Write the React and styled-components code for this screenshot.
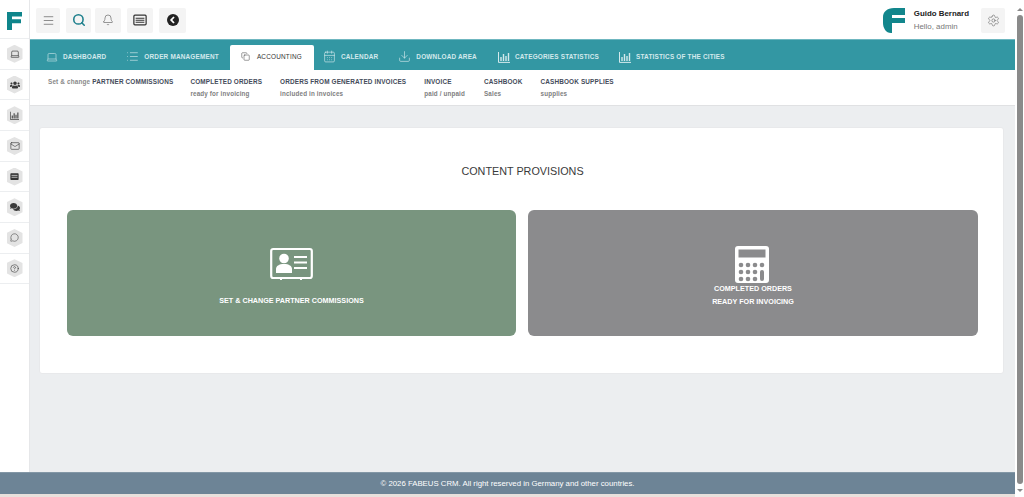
import React from "react";
import styled, { createGlobalStyle } from "styled-components";
import {
  Menu,
  Search,
  Bell,
  Settings,
  Laptop,
  List,
  Copy,
  CalendarDays,
  Download,
  Mail,
  MessageCircle,
  CircleHelp,
} from "lucide-react";
import { FaUsers, FaComments } from "react-icons/fa";

const GlobalStyle = createGlobalStyle`
  html, body {
    margin: 0;
    padding: 0;
    height: 100%;
    overflow: hidden;
    background: #eceef0;
  }
  * { box-sizing: border-box; }
  #root { height: 100%; }
`;

const Page = styled.div`
  width: 1024px;
  height: 497px;
  display: flex;
  font-family: "Liberation Sans", Arial, sans-serif;
  color: #333;
  overflow: hidden;
`;

const Main = styled.div`
  width: 1015px;
  height: 497px;
  display: flex;
  flex-direction: column;
  flex-shrink: 0;
`;

const Body = styled.div`
  flex: 1;
  display: flex;
  min-height: 0;
`;

const Side = styled.aside`
  width: 30px;
  flex-shrink: 0;
  background: #fff;
  border-right: 1px solid #e6e7e9;
  display: flex;
  flex-direction: column;
`;

const LogoCell = styled.div`
  height: 38px;
  display: flex;
  align-items: center;
  justify-content: center;
  padding: 4px 1px 0 0;
`;

const SideItem = styled.div`
  height: 30.7px;
  display: flex;
  align-items: center;
  justify-content: center;
  border-top: 1px solid #eceef0;
  &:last-child {
    border-bottom: 1px solid #eceef0;
  }
`;

const Hex = styled.div`
  width: 16px;
  height: 18px;
  background: #e3e3e3;
  clip-path: polygon(50% 0, 100% 22%, 100% 78%, 50% 100%, 0 78%, 0 22%);
  display: flex;
  align-items: center;
  justify-content: center;
  color: #3a3a3a;
`;

const Right = styled.div`
  flex: 1;
  min-width: 0;
  display: flex;
  flex-direction: column;
`;

const TopBar = styled.header`
  height: 39px;
  flex-shrink: 0;
  background: #fff;
  display: flex;
  align-items: center;
  padding: 1px 9px 0 6px;
`;

const ToolButton = styled.button`
  width: ${(p) => p.$w || 25}px;
  height: 25px;
  margin-right: ${(p) => p.$gap ?? 6}px;
  padding: 0;
  border: none;
  border-radius: 2px;
  background: #f4f4f4;
  display: flex;
  align-items: center;
  justify-content: center;
  flex-shrink: 0;
  color: ${(p) => p.$color || "#555"};
`;

const Spacer = styled.div`
  flex: 1;
`;

const User = styled.div`
  display: flex;
  flex-direction: column;
  gap: 4px;
  margin: 0 12px 0 9px;
  font-size: 7.9px;
`;

const UserName = styled.span`
  font-weight: bold;
  color: #222;
`;

const UserHello = styled.span`
  color: #777;
`;

const NavBar = styled.nav`
  height: 31px;
  flex-shrink: 0;
  background: #3397a3;
  border-top: 1px solid #6fb7c0;
  display: flex;
  align-items: flex-end;
`;

const NavItem = styled.a`
  height: 25px;
  padding: 0 ${(p) => p.$pr ?? 10}px 2px ${(p) => p.$pl ?? 10}px;
  display: flex;
  align-items: center;
  gap: ${(p) => (p.$active ? 7 : 5)}px;
  font-size: 6.4px;
  font-weight: ${(p) => (p.$active ? "normal" : "bold")};
  letter-spacing: 0.2px;
  white-space: nowrap;
  color: ${(p) => (p.$active ? "#333" : "#d3e9ec")};
  background: ${(p) => (p.$active ? "#fff" : "transparent")};
  border-radius: 2px 2px 0 0;
`;

const SubBar = styled.div`
  height: 36px;
  flex-shrink: 0;
  background: #fff;
  border-bottom: 1px solid #e0e1e3;
  display: flex;
  padding: 8px 0 0 18px;
`;

const SubItem = styled.div`
  margin-right: ${(p) => p.$gap}px;
  display: flex;
  flex-direction: column;
  gap: 5px;
  font-size: 6.4px;
  letter-spacing: 0.15px;
  white-space: nowrap;
`;

const SubTitle = styled.span`
  font-weight: bold;
  color: #444b5a;
`;

const SubLight = styled.span`
  font-weight: bold;
  color: #8a8a8a;
`;

const SubNote = styled.span`
  color: #808080;
  font-weight: bold;
  font-size: 6.3px;
`;

const Content = styled.main`
  flex: 1;
  min-height: 0;
  padding: 21px 11px 0 9px;
  background: #eceef0;
`;

const Card = styled.section`
  height: 247px;
  background: #fff;
  border: 1px solid #e8e9eb;
  border-radius: 3px;
  padding: 36px 25px 0 27px;
`;

const CardTitle = styled.h2`
  margin: 0 0 32px;
  font-size: 10.8px;
  line-height: 14px;
  font-weight: normal;
  text-align: center;
  color: #3a3a3a;
`;

const Tiles = styled.div`
  display: grid;
  grid-template-columns: 449px 1fr;
  gap: 12px;
`;

const Tile = styled.a`
  height: 126px;
  border-radius: 6px;
  background: ${(p) => p.$bg};
  color: #fff;
  display: flex;
  flex-direction: column;
  align-items: center;
  padding-top: ${(p) => p.$top}px;
  font-size: 7.2px;
  font-weight: bold;
  text-align: center;
`;

const TileLabel = styled.div`
  margin-top: ${(p) => p.$mt}px;
  line-height: 12.5px;
`;

const CalcWrap = styled.div`
  margin-right: 3px;
  height: 37px;
`;

const Footer = styled.footer`
  height: 22px;
  flex-shrink: 0;
  background: #6d8496;
  border-top: 1px solid #8397a6;
  color: #fff;
  font-size: 7.8px;
  display: flex;
  align-items: center;
  justify-content: center;
`;

const Strip = styled.div`
  height: 3px;
  flex-shrink: 0;
  background: #e8e0dc;
`;

const Scrollbar = styled.div`
  width: 9px;
  height: 497px;
  flex-shrink: 0;
  background: #fff;
  display: flex;
  flex-direction: column;
  align-items: center;
  padding: 8px 0 5px;
`;

const ScrollThumb = styled.div`
  flex: 1;
  width: 6px;
  margin: 4px 0 5px;
  border-radius: 3px;
  background: #8a8a8a;
`;

const ScrollArrow = styled.div`
  width: 0;
  height: 0;
  border-left: 3px solid transparent;
  border-right: 3px solid transparent;
  ${(p) =>
    p.$down ? "border-top: 3px solid #8a8a8a;" : "border-bottom: 3px solid #8a8a8a;"}
`;

const FLogo = () => (
  <svg width="15" height="18" viewBox="0 0 15 18">
    <path d="M0 0h15v4.6H5v2.6h9v4H5V18H0z" fill="#0f858b" />
  </svg>
);

const UserLogo = () => (
  <svg width="22" height="25" viewBox="0 0 22 25">
    <path d="M11 0h11v7H9v3h13v5H9v10H8C3 25 0 20 0 15V9C0 4 4 0 11 0z" fill="#12868c" />
  </svg>
);

const NewsIcon = ({ size = 14 }) => (
  <svg width={size} height={size} viewBox="0 0 16 16">
    <rect x="1" y="2.5" width="14" height="11" rx="1.2" fill="none" stroke="#333" strokeWidth="1.4" />
    <path d="M3 6h10M3 8.2h10M3 10.6h10" stroke="#333" strokeWidth="1.2" />
  </svg>
);

const BackIcon = () => (
  <svg width="12" height="12" viewBox="0 0 12 12">
    <circle cx="6" cy="6" r="6" fill="#222" />
    <path d="M7 3L4.2 6 7 9" fill="none" stroke="#fff" strokeWidth="1.8" />
  </svg>
);

const BarsIcon = ({ size = 12 }) => (
  <svg width={size} height={size} viewBox="0 0 12 12" fill="none" stroke="currentColor">
    <path d="M0.5 1v10.4H12" strokeWidth="1" />
    <path d="M3 10V6M5.5 10V3M8 10V5M10.5 10V2" strokeWidth="1.4" />
  </svg>
);

const PanelIcon = () => (
  <svg width="9" height="9" viewBox="0 0 12 12">
    <rect x="0.5" y="1.5" width="11" height="9" rx="1" fill="#333" />
    <path d="M2 4.5h8M2 7h8" stroke="#e3e3e3" strokeWidth="1" />
  </svg>
);

const ContactCard = () => (
  <svg width="43" height="34" viewBox="0 0 43 34">
    <rect x="1.2" y="2" width="40.6" height="29" rx="2" fill="none" stroke="#fff" strokeWidth="2.2" />
    <path d="M11 31v2M31 31v2" stroke="#fff" strokeWidth="2" />
    <circle cx="14" cy="11.5" r="4.8" fill="#fff" />
    <path d="M6 26v-4c0-3 3-5 8-5s8 2 8 5v4z" fill="#fff" />
    <path d="M24 10h13M24 15.5h13M24 21h13" stroke="#fff" strokeWidth="2.2" />
  </svg>
);

const Calculator = () => {
  const keys = [];
  [19, 26, 33].forEach((y) =>
    [6, 13, 20, 27].forEach((x) => {
      if (x === 27 && y > 19) return;
      keys.push(<circle key={x + "-" + y} cx={x} cy={y} r="2.3" fill="#8b8b8d" />);
    })
  );
  return (
    <svg width="34" height="37" viewBox="0 0 34 37">
      <rect x="0" y="0" width="34" height="37" rx="3" fill="#fff" />
      <rect x="3.5" y="3.5" width="27" height="8" fill="#8b8b8d" />
      {keys}
      <rect x="25" y="24" width="4" height="11" rx="2" fill="#8b8b8d" />
    </svg>
  );
};

const sideIcons = [
  <Laptop size={10} strokeWidth={1.6} />,
  <FaUsers size={10} />,
  <BarsIcon size={9} />,
  <Mail size={10} strokeWidth={1.5} />,
  <PanelIcon />,
  <FaComments size={10} />,
  <MessageCircle size={9} strokeWidth={1.4} />,
  <CircleHelp size={9} strokeWidth={1.6} />,
];

const navItems = [
  { label: "DASHBOARD", icon: <Laptop size={12} strokeWidth={1.2} />, pl: 16 },
  { label: "ORDER MANAGEMENT", icon: <List size={13} strokeWidth={1.2} />, pr: 11 },
  { label: "ACCOUNTING", icon: <Copy size={9} strokeWidth={1.3} />, active: true, pl: 11, pr: 12 },
  { label: "CALENDAR", icon: <CalendarDays size={13} strokeWidth={1.2} />, pl: 9, pr: 10 },
  { label: "DOWNLOAD AREA", icon: <Download size={13} strokeWidth={1.2} />, pr: 11 },
  { label: "CATEGORIES STATISTICS", icon: <BarsIcon /> },
  { label: "STATISTICS OF THE CITIES", icon: <BarsIcon /> },
];

export default function App() {
  return (
    <Page>
      <GlobalStyle />
      <Main>
        <Body>
          <Side>
            <LogoCell>
              <FLogo />
            </LogoCell>
            {sideIcons.map((icon, i) => (
              <SideItem key={i}>
                <Hex>{icon}</Hex>
              </SideItem>
            ))}
          </Side>
          <Right>
            <TopBar>
              <ToolButton $w={24}>
                <Menu size={13} strokeWidth={1.2} />
              </ToolButton>
              <ToolButton $color="#1d7f8c" $gap={4}>
                <Search size={14} strokeWidth={2.7} />
              </ToolButton>
              <ToolButton $w={26}>
                <Bell size={12} strokeWidth={1.2} />
              </ToolButton>
              <ToolButton $w={26}>
                <NewsIcon />
              </ToolButton>
              <ToolButton $w={27}>
                <BackIcon />
              </ToolButton>
              <Spacer />
              <UserLogo />
              <User>
                <UserName>Guido Bernard</UserName>
                <UserHello>Hello, admin</UserHello>
              </User>
              <ToolButton $w={24} $gap={1}>
                <Settings size={13} strokeWidth={1} />
              </ToolButton>
            </TopBar>
            <NavBar>
              {navItems.map((n) => (
                <NavItem key={n.label} $active={n.active} $pl={n.pl} $pr={n.pr}>
                  {n.icon}
                  {n.label}
                </NavItem>
              ))}
            </NavBar>
            <SubBar>
              <SubItem $gap={17}>
                <span>
                  <SubLight>Set &amp; change </SubLight>
                  <SubTitle>PARTNER COMMISSIONS</SubTitle>
                </span>
              </SubItem>
              <SubItem $gap={18}>
                <SubTitle>COMPLETED ORDERS</SubTitle>
                <SubNote>ready for invoicing</SubNote>
              </SubItem>
              <SubItem $gap={18}>
                <SubTitle>ORDERS FROM GENERATED INVOICES</SubTitle>
                <SubNote>included in invoices</SubNote>
              </SubItem>
              <SubItem $gap={19}>
                <SubTitle>INVOICE</SubTitle>
                <SubNote>paid / unpaid</SubNote>
              </SubItem>
              <SubItem $gap={18}>
                <SubTitle>CASHBOOK</SubTitle>
                <SubNote>Sales</SubNote>
              </SubItem>
              <SubItem $gap={0}>
                <SubTitle>CASHBOOK SUPPLIES</SubTitle>
                <SubNote>supplies</SubNote>
              </SubItem>
            </SubBar>
            <Content>
              <Card>
                <CardTitle>CONTENT PROVISIONS</CardTitle>
                <Tiles>
                  <Tile $bg="#79957f" $top={37}>
                    <ContactCard />
                    <TileLabel $mt={14}>SET &amp; CHANGE PARTNER COMMISSIONS</TileLabel>
                  </Tile>
                  <Tile $bg="#8b8b8d" $top={36}>
                    <CalcWrap>
                      <Calculator />
                    </CalcWrap>
                    <TileLabel $mt={0}>
                      COMPLETED ORDERS
                      <br />
                      READY FOR INVOICING
                    </TileLabel>
                  </Tile>
                </Tiles>
              </Card>
            </Content>
          </Right>
        </Body>
        <Footer>© 2026 FABEUS CRM. All right reserved in Germany and other countries.</Footer>
        <Strip />
      </Main>
      <Scrollbar>
        <ScrollArrow />
        <ScrollThumb />
        <ScrollArrow $down />
      </Scrollbar>
    </Page>
  );
}
